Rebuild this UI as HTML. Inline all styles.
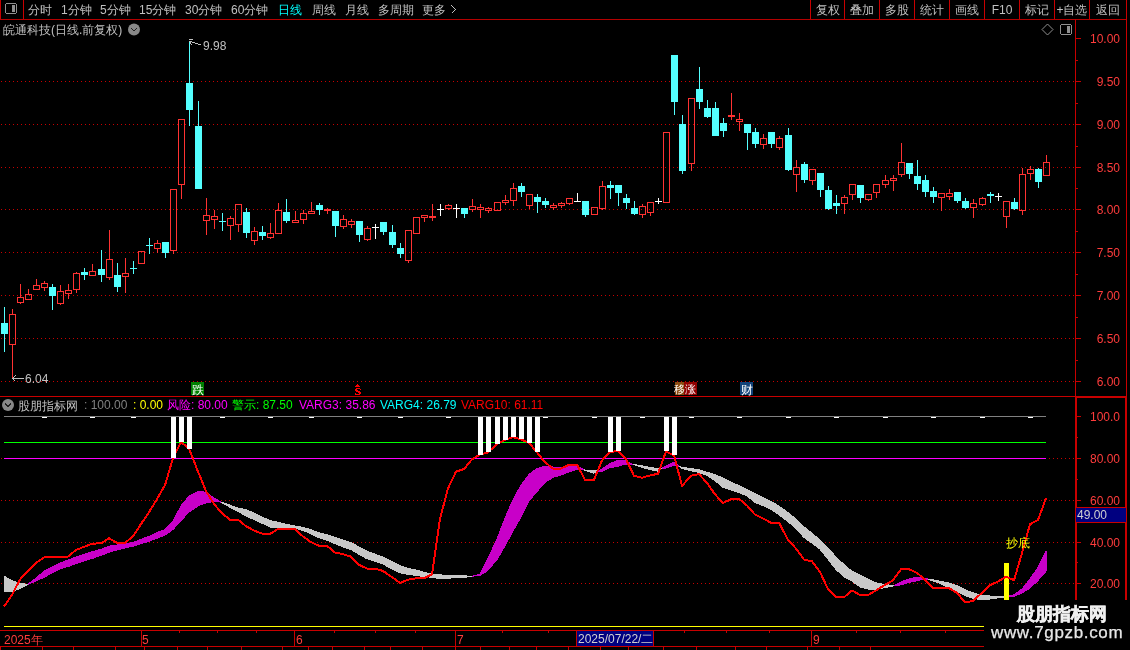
<!DOCTYPE html>
<html><head><meta charset="utf-8"><style>
html,body{margin:0;padding:0;background:#000;width:1130px;height:650px;overflow:hidden;}
svg{display:block;will-change:transform;}
text{font-family:"Liberation Sans",sans-serif;}
</style></head><body>
<svg width="1130" height="650" viewBox="0 0 1130 650" shape-rendering="crispEdges" font-family="Liberation Sans, sans-serif"><line x1="0" y1="19.5" x2="1126" y2="19.5" stroke="#b40000" stroke-width="1"/>
<line x1="23.5" y1="0" x2="23.5" y2="19" stroke="#c80000"/><line x1="0.5" y1="0" x2="0.5" y2="19" stroke="#c80000"/>
<rect x="5.5" y="3.5" width="11" height="10" rx="2" fill="none" stroke="#909090"/>
<rect x="12" y="5" width="3" height="7" fill="#909090"/>
<text x="28" y="14" fill="#c0c0c0" font-size="12">分时</text>
<text x="61" y="14" fill="#c0c0c0" font-size="12">1分钟</text>
<text x="100" y="14" fill="#c0c0c0" font-size="12">5分钟</text>
<text x="139" y="14" fill="#c0c0c0" font-size="12">15分钟</text>
<text x="185" y="14" fill="#c0c0c0" font-size="12">30分钟</text>
<text x="231" y="14" fill="#c0c0c0" font-size="12">60分钟</text>
<text x="278" y="14" fill="#00ffff" font-size="12">日线</text>
<text x="312" y="14" fill="#c0c0c0" font-size="12">周线</text>
<text x="345" y="14" fill="#c0c0c0" font-size="12">月线</text>
<text x="378" y="14" fill="#c0c0c0" font-size="12">多周期</text>
<text x="422" y="14" fill="#c0c0c0" font-size="12">更多</text>
<path d="M451.5 5.5 L455.5 9.5 L451.5 13.5" fill="none" stroke="#c0c0c0"/>
<line x1="810.5" y1="0" x2="810.5" y2="19" stroke="#c80000"/>
<line x1="844.5" y1="0" x2="844.5" y2="19" stroke="#c80000"/>
<line x1="879.5" y1="0" x2="879.5" y2="19" stroke="#c80000"/>
<line x1="914.5" y1="0" x2="914.5" y2="19" stroke="#c80000"/>
<line x1="949.5" y1="0" x2="949.5" y2="19" stroke="#c80000"/>
<line x1="984.5" y1="0" x2="984.5" y2="19" stroke="#c80000"/>
<line x1="1019.5" y1="0" x2="1019.5" y2="19" stroke="#c80000"/>
<line x1="1054.5" y1="0" x2="1054.5" y2="19" stroke="#c80000"/>
<line x1="1089.5" y1="0" x2="1089.5" y2="19" stroke="#c80000"/>
<text x="827.5" y="14" fill="#c0c0c0" font-size="12" text-anchor="middle">复权</text>
<text x="862.0" y="14" fill="#c0c0c0" font-size="12" text-anchor="middle">叠加</text>
<text x="897.0" y="14" fill="#c0c0c0" font-size="12" text-anchor="middle">多股</text>
<text x="932.0" y="14" fill="#c0c0c0" font-size="12" text-anchor="middle">统计</text>
<text x="967.0" y="14" fill="#c0c0c0" font-size="12" text-anchor="middle">画线</text>
<text x="1002.0" y="14" fill="#c0c0c0" font-size="12" text-anchor="middle">F10</text>
<text x="1037.0" y="14" fill="#c0c0c0" font-size="12" text-anchor="middle">标记</text>
<text x="1072.0" y="14" fill="#c0c0c0" font-size="12" text-anchor="middle">+自选</text>
<text x="1108.0" y="14" fill="#c0c0c0" font-size="12" text-anchor="middle">返回</text>
<line x1="1126.5" y1="0" x2="1126.5" y2="650" stroke="#c80000"/>
<rect x="1125" y="396" width="2" height="234" fill="#c80000"/>
<text x="3" y="34" fill="#c0c0c0" font-size="12">皖通科技(日线.前复权)</text>
<circle cx="134" cy="29.5" r="6" fill="#888888" shape-rendering="geometricPrecision"/>
<path d="M131 28 L134 31 L137 28" fill="none" stroke="#202020" stroke-width="1.2"/>
<path d="M1047.5 24 L1053 29.5 L1047.5 35 L1042 29.5 Z" fill="none" stroke="#909090" shape-rendering="geometricPrecision"/>
<rect x="1060.5" y="24.5" width="11" height="10" rx="2" fill="none" stroke="#909090"/>
<rect x="1067" y="26" width="3" height="7" fill="#909090"/>
<line x1="1" y1="81.5" x2="1075" y2="81.5" stroke="#c80000" stroke-dasharray="1 3"/>
<line x1="1" y1="124.5" x2="1075" y2="124.5" stroke="#c80000" stroke-dasharray="1 3"/>
<line x1="1" y1="167.5" x2="1075" y2="167.5" stroke="#c80000" stroke-dasharray="1 3"/>
<line x1="1" y1="209.5" x2="1075" y2="209.5" stroke="#c80000" stroke-dasharray="1 3"/>
<line x1="1" y1="252.5" x2="1075" y2="252.5" stroke="#c80000" stroke-dasharray="1 3"/>
<line x1="1" y1="295.5" x2="1075" y2="295.5" stroke="#c80000" stroke-dasharray="1 3"/>
<line x1="1" y1="338.5" x2="1075" y2="338.5" stroke="#c80000" stroke-dasharray="1 3"/>
<line x1="1" y1="381.5" x2="1075" y2="381.5" stroke="#c80000" stroke-dasharray="1 3"/>
<line x1="1075.5" y1="19" x2="1075.5" y2="650" stroke="#c80000"/>
<line x1="1075" y1="38.5" x2="1081" y2="38.5" stroke="#c80000"/>
<text x="1120" y="43" fill="#ff3c3c" font-size="12" text-anchor="end">10.00</text>
<line x1="1075" y1="60.5" x2="1078" y2="60.5" stroke="#c80000"/>
<line x1="1075" y1="81.5" x2="1081" y2="81.5" stroke="#c80000"/>
<text x="1120" y="86" fill="#ff3c3c" font-size="12" text-anchor="end">9.50</text>
<line x1="1075" y1="103.5" x2="1078" y2="103.5" stroke="#c80000"/>
<line x1="1075" y1="124.5" x2="1081" y2="124.5" stroke="#c80000"/>
<text x="1120" y="129" fill="#ff3c3c" font-size="12" text-anchor="end">9.00</text>
<line x1="1075" y1="146.5" x2="1078" y2="146.5" stroke="#c80000"/>
<line x1="1075" y1="167.5" x2="1081" y2="167.5" stroke="#c80000"/>
<text x="1120" y="172" fill="#ff3c3c" font-size="12" text-anchor="end">8.50</text>
<line x1="1075" y1="188.5" x2="1078" y2="188.5" stroke="#c80000"/>
<line x1="1075" y1="209.5" x2="1081" y2="209.5" stroke="#c80000"/>
<text x="1120" y="214" fill="#ff3c3c" font-size="12" text-anchor="end">8.00</text>
<line x1="1075" y1="231.5" x2="1078" y2="231.5" stroke="#c80000"/>
<line x1="1075" y1="252.5" x2="1081" y2="252.5" stroke="#c80000"/>
<text x="1120" y="257" fill="#ff3c3c" font-size="12" text-anchor="end">7.50</text>
<line x1="1075" y1="274.5" x2="1078" y2="274.5" stroke="#c80000"/>
<line x1="1075" y1="295.5" x2="1081" y2="295.5" stroke="#c80000"/>
<text x="1120" y="300" fill="#ff3c3c" font-size="12" text-anchor="end">7.00</text>
<line x1="1075" y1="317.5" x2="1078" y2="317.5" stroke="#c80000"/>
<line x1="1075" y1="338.5" x2="1081" y2="338.5" stroke="#c80000"/>
<text x="1120" y="343" fill="#ff3c3c" font-size="12" text-anchor="end">6.50</text>
<line x1="1075" y1="360.5" x2="1078" y2="360.5" stroke="#c80000"/>
<line x1="1075" y1="381.5" x2="1081" y2="381.5" stroke="#c80000"/>
<text x="1120" y="386" fill="#ff3c3c" font-size="12" text-anchor="end">6.00</text>
<path d="M9.5 314.5H15.5V344.5H9.5ZM12.5 309V314M12.5 345V378M17.5 297.5H23.5V302.5H17.5ZM20.5 284V297M20.5 303V304M25.5 294.5H31.5V299.5H25.5ZM28.5 289V294M33.5 285.5H39.5V289.5H33.5ZM36.5 279V285M41.5 283.5H47.5V287.5H41.5ZM44.5 281V283M44.5 288V291M57.5 291.5H63.5V303.5H57.5ZM60.5 285V291M60.5 304V305M65.5 290.5H71.5V293.5H65.5ZM68.5 284V290M68.5 294V299M73.5 273.5H79.5V289.5H73.5ZM76.5 272V273M76.5 290V293M89.5 271.5H95.5V275.5H89.5ZM92.5 264V271M106.5 259.5H112.5V277.5H106.5ZM109.5 230V259M109.5 278V280M122.5 273.5H128.5V276.5H122.5ZM125.5 258V273M125.5 277V293M138.5 251.5H144.5V263.5H138.5ZM154.5 243.5H160.5V248.5H154.5ZM157.5 240V243M157.5 249V253M170.5 189.5H176.5V250.5H170.5ZM173.5 251V254M178.5 119.5H184.5V184.5H178.5ZM181.5 185V199M203.5 215.5H209.5V220.5H203.5ZM206.5 198V215M206.5 221V235M211.5 216.5H217.5V219.5H211.5ZM214.5 210V216M214.5 220V229M227.5 218.5H233.5V225.5H227.5ZM230.5 216V218M230.5 226V240M235.5 204.5H241.5V224.5H235.5ZM238.5 225V232M251.5 231.5H257.5V240.5H251.5ZM254.5 227V231M254.5 241V245M267.5 233.5H273.5V237.5H267.5ZM270.5 223V233M270.5 238V239M275.5 210.5H281.5V233.5H275.5ZM278.5 203V210M292.5 220.5H298.5V222.5H292.5ZM295.5 211V220M300.5 213.5H306.5V219.5H300.5ZM303.5 210V213M303.5 220V224M308.5 211.5H314.5V213.5H308.5ZM311.5 202V211M324 209.5H331M324 210.5H331M327.5 208V209M327.5 211V214M340.5 219.5H346.5V226.5H340.5ZM343.5 215V219M343.5 227V229M348.5 221.5H354.5V224.5H348.5ZM351.5 219V221M351.5 225V228M364.5 228.5H370.5V239.5H364.5ZM367.5 226V228M367.5 240V241M405.5 230.5H411.5V260.5H405.5ZM408.5 261V263M413.5 217.5H419.5V233.5H413.5ZM421.5 215.5H427.5V217.5H421.5ZM424.5 218V222M429 216.5H436M429 217.5H436M432.5 204V216M432.5 218V221M445.5 205.5H451.5V208.5H445.5ZM448.5 204V205M448.5 209V210M469.5 206.5H475.5V209.5H469.5ZM472.5 199V206M472.5 210V212M477.5 207.5H483.5V209.5H477.5ZM480.5 204V207M480.5 210V218M485.5 208.5H491.5V210.5H485.5ZM488.5 207V208M488.5 211V213M494.5 202.5H500.5V210.5H494.5ZM502.5 200.5H508.5V202.5H502.5ZM505.5 195V200M505.5 203V205M510.5 188.5H516.5V200.5H510.5ZM513.5 183V188M513.5 201V206M526.5 194.5H532.5V205.5H526.5ZM529.5 206V209M550.5 205.5H556.5V207.5H550.5ZM553.5 203V205M553.5 208V210M558.5 203.5H564.5V205.5H558.5ZM561.5 202V203M561.5 206V208M566.5 198.5H572.5V203.5H566.5ZM569.5 204V205M591.5 207.5H597.5V214.5H591.5ZM599.5 186.5H605.5V208.5H599.5ZM602.5 181V186M602.5 209V210M639.5 206.5H645.5V214.5H639.5ZM642.5 204V206M642.5 215V218M647.5 202.5H653.5V212.5H647.5ZM650.5 213V216M663.5 132.5H669.5V202.5H663.5ZM688.5 98.5H694.5V163.5H688.5ZM691.5 164V171M728 115.5H735M728 116.5H735M731.5 93V115M731.5 117V120M736.5 119.5H742.5V121.5H736.5ZM739.5 113V119M739.5 122V131M760.5 138.5H766.5V144.5H760.5ZM763.5 134V138M763.5 145V149M776.5 138.5H782.5V147.5H776.5ZM779.5 136V138M779.5 148V150M793.5 167.5H799.5V174.5H793.5ZM796.5 160V167M796.5 175V192M809.5 169.5H815.5V180.5H809.5ZM812.5 181V185M841.5 197.5H847.5V203.5H841.5ZM844.5 195V197M844.5 204V214M849.5 184.5H855.5V194.5H849.5ZM852.5 195V200M865.5 194.5H871.5V199.5H865.5ZM868.5 200V201M873.5 184.5H879.5V192.5H873.5ZM876.5 193V198M882.5 180.5H888.5V184.5H882.5ZM885.5 175V180M885.5 185V188M890.5 178.5H896.5V180.5H890.5ZM893.5 175V178M893.5 181V191M898.5 162.5H904.5V174.5H898.5ZM901.5 143V162M901.5 175V177M938.5 193.5H944.5V197.5H938.5ZM941.5 198V211M946.5 193.5H952.5V196.5H946.5ZM949.5 189V193M949.5 197V200M970.5 203.5H976.5V207.5H970.5ZM973.5 199V203M973.5 208V218M979.5 198.5H985.5V204.5H979.5ZM982.5 197V198M982.5 205V206M1003.5 201.5H1009.5V216.5H1003.5ZM1006.5 217V228M1019.5 174.5H1025.5V210.5H1019.5ZM1022.5 168V174M1022.5 211V215M1027.5 169.5H1033.5V173.5H1027.5ZM1030.5 166V169M1030.5 174V180M1043.5 162.5H1049.5V175.5H1043.5ZM1046.5 155V162" fill="none" stroke="#ff3232" stroke-width="1"/>
<path d="M4.5 307V352M52.5 284V310M84.5 268V280M101.5 250V282M117.5 263V292M133.5 261V274M149.5 238V254M165.5 242V258M189.5 41V126M198.5 101V189M222.5 213V231M246.5 208V238M262.5 226V240M286.5 199V223M319.5 203V215M335.5 211V237M359.5 221V242M383.5 222V235M392.5 225V248M400.5 243V258M464.5 208V218M521.5 183V197M537.5 194V213M545.5 198V208M585.5 201V217M610.5 181V199M618.5 185V206M626.5 194V209M634.5 201V215M674.5 55V115M682.5 115V174M699.5 67V109M707.5 100V118M715.5 102V136M723.5 118V137M747.5 124V150M755.5 128V148M771.5 132V148M788.5 128V171M804.5 162V183M820.5 173V197M828.5 186V210M836.5 195V214M860.5 185V203M909.5 163V179M917.5 160V190M925.5 175V197M933.5 187V203M957.5 192V203M965.5 198V209M990.5 192V203M1014.5 198V210M1038.5 168V188" fill="none" stroke="#54ffff" stroke-width="1"/>
<g fill="#54ffff"><rect x="1" y="323" width="7" height="11"/><rect x="49" y="287" width="7" height="9"/><rect x="81" y="272" width="7" height="3"/><rect x="98" y="269" width="7" height="6"/><rect x="114" y="275" width="7" height="12"/><rect x="130" y="268" width="7" height="1"/><rect x="146" y="245" width="7" height="1"/><rect x="162" y="242" width="7" height="11"/><rect x="186" y="83" width="7" height="27"/><rect x="195" y="126" width="7" height="63"/><rect x="219" y="221" width="7" height="1"/><rect x="243" y="212" width="7" height="21"/><rect x="259" y="232" width="7" height="4"/><rect x="283" y="212" width="7" height="9"/><rect x="316" y="205" width="7" height="5"/><rect x="332" y="211" width="7" height="15"/><rect x="356" y="221" width="7" height="14"/><rect x="380" y="222" width="7" height="10"/><rect x="389" y="232" width="7" height="13"/><rect x="397" y="248" width="7" height="6"/><rect x="461" y="208" width="7" height="6"/><rect x="518" y="186" width="7" height="6"/><rect x="534" y="197" width="7" height="5"/><rect x="542" y="201" width="7" height="4"/><rect x="582" y="201" width="7" height="14"/><rect x="607" y="185" width="7" height="3"/><rect x="615" y="185" width="7" height="8"/><rect x="623" y="198" width="7" height="5"/><rect x="631" y="208" width="7" height="6"/><rect x="671" y="55" width="7" height="47"/><rect x="679" y="124" width="7" height="47"/><rect x="696" y="89" width="7" height="13"/><rect x="704" y="108" width="7" height="9"/><rect x="712" y="108" width="7" height="28"/><rect x="720" y="123" width="7" height="8"/><rect x="744" y="124" width="7" height="9"/><rect x="752" y="132" width="7" height="12"/><rect x="768" y="132" width="7" height="12"/><rect x="785" y="135" width="7" height="35"/><rect x="801" y="164" width="7" height="16"/><rect x="817" y="173" width="7" height="17"/><rect x="825" y="190" width="7" height="19"/><rect x="833" y="203" width="7" height="3"/><rect x="857" y="185" width="7" height="13"/><rect x="906" y="163" width="7" height="11"/><rect x="914" y="176" width="7" height="8"/><rect x="922" y="180" width="7" height="12"/><rect x="930" y="191" width="7" height="6"/><rect x="954" y="192" width="7" height="9"/><rect x="962" y="201" width="7" height="7"/><rect x="987" y="194" width="7" height="2"/><rect x="1011" y="202" width="7" height="7"/><rect x="1035" y="169" width="7" height="13"/></g>
<path d="M372 227.5H379M375.5 224V239M437 209.5H444M440.5 204V216M453 208.5H460M456.5 204V218M574 201.5H581M577.5 193V202M655 201.5H662M658.5 198V204M995 196.5H1002M998.5 193V201" fill="none" stroke="#ffffff" stroke-width="1"/>
<path d="M189 39.5H193M189 41.5H192M192 42.5H195M195 43.5H198M198 44.5H201M190.5 42V44M191.5 44V45" fill="none" stroke="#c0c0c0"/>
<text x="203" y="50" fill="#c0c0c0" font-size="12">9.98</text>
<path d="M12.5 378.5 L24 378.5 M12.5 378.5 L15.5 375.5 M12.5 378.5 L15.5 381.5" fill="none" stroke="#c0c0c0"/>
<text x="25" y="383" fill="#c0c0c0" font-size="12">6.04</text>
<rect x="191" y="382" width="13" height="13" fill="#008000"/>
<text x="197.5" y="393.5" fill="#ffffff" font-size="12" text-anchor="middle">跌</text>
<g fill="#ff0000"><rect x="357" y="384" width="1" height="1"/><rect x="356" y="385" width="3" height="1"/><rect x="355" y="386" width="5" height="1"/><rect x="356" y="388" width="4" height="1"/><rect x="355" y="389" width="2" height="1"/><rect x="360" y="389" width="1" height="1"/><rect x="355" y="390" width="3" height="1"/><rect x="356" y="391" width="4" height="1"/><rect x="358" y="392" width="3" height="1"/><rect x="355" y="393" width="1" height="1"/><rect x="359" y="393" width="2" height="1"/><rect x="355" y="394" width="5" height="1"/></g>
<rect x="675" y="382" width="9" height="13" fill="#8a4c12"/>
<rect x="684" y="382" width="13" height="13" fill="#900000"/>
<text x="679.5" y="393" fill="#ffffff" font-size="11" text-anchor="middle">移</text><text x="690.5" y="393" fill="#ffffff" font-size="11" text-anchor="middle">涨</text>
<rect x="740" y="382" width="13" height="13" fill="#12427a"/>
<text x="746.5" y="393.5" fill="#ffffff" font-size="12" text-anchor="middle">财</text>
<line x1="0" y1="396.5" x2="1126" y2="396.5" stroke="#c80000"/>
<rect x="1076" y="396" width="50" height="2" fill="#c80000"/>
<rect x="1075" y="396" width="2" height="234" fill="#c80000"/>
<circle cx="8" cy="405" r="6" fill="#888888" shape-rendering="geometricPrecision"/>
<path d="M5 403.5 L8 406.5 L11 403.5" fill="none" stroke="#202020" stroke-width="1.2"/>
<text x="18" y="409.5" fill="#c0c0c0" font-size="12">股朋指标网</text>
<text x="84" y="409" fill="#808080" font-size="12">: 100.00</text>
<text x="133" y="409" fill="#ffff00" font-size="12">: 0.00</text>
<text x="167" y="409" fill="#ff00ff" font-size="12">风险: 80.00</text>
<text x="232" y="409" fill="#00ff00" font-size="12">警示: 87.50</text>
<text x="299" y="409" fill="#ff00ff" font-size="12">VARG3: 35.86</text>
<text x="380" y="409" fill="#00ffff" font-size="12">VARG4: 26.79</text>
<text x="461" y="409" fill="#ff0000" font-size="12">VARG10: 61.11</text>
<line x1="1" y1="458.5" x2="1075" y2="458.5" stroke="#c80000" stroke-dasharray="1 3"/>
<line x1="1" y1="500.5" x2="1075" y2="500.5" stroke="#c80000" stroke-dasharray="1 3"/>
<line x1="1" y1="542.5" x2="1075" y2="542.5" stroke="#c80000" stroke-dasharray="1 3"/>
<line x1="1" y1="583.5" x2="1075" y2="583.5" stroke="#c80000" stroke-dasharray="1 3"/>
<line x1="4" y1="416.5" x2="1046" y2="416.5" stroke="#808080"/>
<line x1="4" y1="442.5" x2="1046" y2="442.5" stroke="#00ff00"/>
<line x1="4" y1="458.5" x2="1046" y2="458.5" stroke="#ff00ff"/>
<line x1="1075" y1="416.5" x2="1081" y2="416.5" stroke="#c80000"/>
<text x="1120" y="421" fill="#ff3c3c" font-size="12" text-anchor="end">100.0</text>
<line x1="1075" y1="458.5" x2="1081" y2="458.5" stroke="#c80000"/>
<text x="1120" y="463" fill="#ff3c3c" font-size="12" text-anchor="end">80.00</text>
<line x1="1075" y1="500.5" x2="1081" y2="500.5" stroke="#c80000"/>
<text x="1120" y="505" fill="#ff3c3c" font-size="12" text-anchor="end">60.00</text>
<line x1="1075" y1="542.5" x2="1081" y2="542.5" stroke="#c80000"/>
<text x="1120" y="547" fill="#ff3c3c" font-size="12" text-anchor="end">40.00</text>
<line x1="1075" y1="583.5" x2="1081" y2="583.5" stroke="#c80000"/>
<text x="1120" y="588" fill="#ff3c3c" font-size="12" text-anchor="end">20.00</text>
<line x1="1075" y1="437.5" x2="1078" y2="437.5" stroke="#c80000"/>
<line x1="1075" y1="479.5" x2="1078" y2="479.5" stroke="#c80000"/>
<line x1="1075" y1="521.5" x2="1078" y2="521.5" stroke="#c80000"/>
<line x1="1075" y1="562.5" x2="1078" y2="562.5" stroke="#c80000"/>
<path d="M4.0 591.5 L12.0 592.0 L20.0 588.3 L28.0 584.3 L28.0 584.3 L20.0 583.5 L12.0 580.5 L4.0 576.2Z" fill="#c8c8c8" stroke="#c8c8c8" stroke-width="1" stroke-linejoin="round"/>
<path d="M28.0 584.3 L28.0 584.3 L36.0 578.0 L44.0 571.3 L52.0 567.0 L60.0 563.2 L68.0 560.0 L76.0 557.0 L84.0 554.2 L92.0 551.7 L101.0 549.3 L109.0 546.2 L117.0 545.0 L125.0 543.7 L133.0 542.5 L141.0 539.4 L149.0 536.3 L157.0 532.6 L165.0 529.6 L173.0 521.0 L181.0 505.9 L189.0 496.0 L198.0 491.3 L206.0 492.3 L214.0 497.9 L220.9 502.1 L220.9 502.1 L214.0 501.6 L206.0 502.8 L198.0 505.9 L189.0 512.0 L181.0 520.6 L173.0 529.5 L165.0 535.1 L157.0 538.2 L149.0 541.3 L141.0 543.7 L133.0 546.2 L125.0 548.0 L117.0 549.9 L109.0 552.3 L101.0 555.4 L92.0 558.5 L84.0 561.0 L76.0 563.8 L68.0 566.5 L60.0 569.0 L52.0 573.0 L44.0 577.3 L36.0 581.0 L28.0 584.3 L28.0 584.3Z" fill="#c800c8" stroke="#c800c8" stroke-width="1" stroke-linejoin="round"/>
<path d="M220.9 502.1 L222.0 502.8 L230.0 507.3 L238.0 511.4 L246.0 516.0 L254.0 519.5 L262.0 523.2 L270.0 527.1 L278.0 527.8 L286.0 527.8 L295.0 527.8 L303.0 530.5 L311.0 533.8 L319.0 537.7 L327.0 540.2 L335.0 543.7 L343.0 546.9 L351.0 549.6 L359.0 554.4 L367.0 558.8 L375.0 561.4 L383.0 564.1 L392.0 569.0 L400.0 572.7 L408.0 574.4 L416.0 575.4 L424.0 576.5 L432.0 577.3 L440.0 578.7 L448.0 578.3 L456.0 577.6 L464.0 577.6 L472.0 576.2 L472.0 576.2 L464.0 575.9 L456.0 575.9 L448.0 575.5 L440.0 574.8 L432.0 574.2 L424.0 572.2 L416.0 570.1 L408.0 568.4 L400.0 565.7 L392.0 561.4 L383.0 557.1 L375.0 554.2 L367.0 551.2 L359.0 546.9 L351.0 542.6 L343.0 539.9 L335.0 537.2 L327.0 534.8 L319.0 532.8 L311.0 529.7 L303.0 527.3 L295.0 526.0 L286.0 524.2 L278.0 522.2 L270.0 520.5 L262.0 517.1 L254.0 513.1 L246.0 509.5 L238.0 508.0 L230.0 505.2 L222.0 502.2 L220.9 502.1Z" fill="#c8c8c8" stroke="#c8c8c8" stroke-width="1" stroke-linejoin="round"/>
<path d="M472.0 576.2 L472.0 576.2 L480.0 574.4 L488.0 558.2 L497.0 539.1 L505.0 518.0 L513.0 499.7 L521.0 485.1 L529.0 474.4 L537.0 468.5 L545.0 466.1 L553.0 467.0 L561.0 467.4 L569.0 466.3 L577.0 465.8 L584.0 469.9 L584.0 469.9 L577.0 469.5 L569.0 472.0 L561.0 474.9 L553.0 477.4 L545.0 482.4 L537.0 491.6 L529.0 501.0 L521.0 517.0 L513.0 531.0 L505.0 546.0 L497.0 559.5 L488.0 570.3 L480.0 575.5 L472.0 576.2 L472.0 576.2Z" fill="#c800c8" stroke="#c800c8" stroke-width="1" stroke-linejoin="round"/>
<path d="M584.0 469.9 L585.0 470.5 L594.0 473.2 L598.3 471.0 L598.3 471.0 L594.0 470.5 L585.0 470.0 L584.0 469.9Z" fill="#c8c8c8" stroke="#c8c8c8" stroke-width="1" stroke-linejoin="round"/>
<path d="M598.3 471.0 L602.0 469.1 L610.0 463.5 L618.0 460.2 L626.0 460.9 L633.3 464.5 L633.3 464.5 L626.0 464.0 L618.0 466.2 L610.0 467.7 L602.0 471.4 L598.3 471.0Z" fill="#c800c8" stroke="#c800c8" stroke-width="1" stroke-linejoin="round"/>
<path d="M633.3 464.5 L634.0 464.8 L642.0 467.3 L650.0 469.6 L658.0 471.2 L662.2 468.3 L662.2 468.3 L658.0 468.6 L650.0 467.3 L642.0 465.8 L634.0 464.5 L633.3 464.5Z" fill="#c8c8c8" stroke="#c8c8c8" stroke-width="1" stroke-linejoin="round"/>
<path d="M662.2 468.3 L666.0 465.8 L674.0 462.3 L679.6 466.7 L679.6 466.7 L674.0 465.4 L666.0 468.1 L662.2 468.3Z" fill="#c800c8" stroke="#c800c8" stroke-width="1" stroke-linejoin="round"/>
<path d="M679.6 466.7 L682.0 468.6 L691.0 470.8 L699.0 472.4 L707.0 475.5 L715.0 480.8 L723.0 487.3 L731.0 490.0 L739.0 492.5 L747.0 495.9 L755.0 502.4 L763.0 505.6 L771.0 509.4 L779.0 514.7 L788.0 521.8 L796.0 528.3 L804.0 537.5 L812.0 543.0 L820.0 549.2 L828.0 559.2 L836.0 569.5 L844.0 576.9 L852.0 581.2 L860.0 586.9 L868.0 589.1 L876.0 589.3 L885.0 587.7 L893.0 586.0 L894.2 585.4 L894.2 585.4 L893.0 585.5 L885.0 584.6 L876.0 582.9 L868.0 579.3 L860.0 574.9 L852.0 571.2 L844.0 564.6 L836.0 556.9 L828.0 548.0 L820.0 540.0 L812.0 533.2 L804.0 526.9 L796.0 519.0 L788.0 512.6 L779.0 506.1 L771.0 501.3 L763.0 497.5 L755.0 493.5 L747.0 489.4 L739.0 485.7 L731.0 482.1 L723.0 478.1 L715.0 474.6 L707.0 472.2 L699.0 469.7 L691.0 468.5 L682.0 467.3 L679.6 466.7Z" fill="#c8c8c8" stroke="#c8c8c8" stroke-width="1" stroke-linejoin="round"/>
<path d="M894.2 585.4 L901.0 582.0 L909.0 578.9 L917.0 577.1 L925.0 578.2 L928.3 579.3 L928.3 579.3 L925.0 578.9 L917.0 580.7 L909.0 582.4 L901.0 584.9 L894.2 585.4Z" fill="#c800c8" stroke="#c800c8" stroke-width="1" stroke-linejoin="round"/>
<path d="M928.3 579.3 L933.0 580.8 L941.0 583.8 L949.0 587.9 L957.0 591.5 L965.0 595.5 L973.0 598.2 L982.0 599.8 L990.0 599.0 L998.0 597.9 L1006.0 596.7 L1007.3 596.4 L1007.3 596.4 L1006.0 596.4 L998.0 596.2 L990.0 596.0 L982.0 595.5 L973.0 592.8 L965.0 589.8 L957.0 585.8 L949.0 583.1 L941.0 581.5 L933.0 579.8 L928.3 579.3Z" fill="#c8c8c8" stroke="#c8c8c8" stroke-width="1" stroke-linejoin="round"/>
<path d="M1007.3 596.4 L1014.0 594.7 L1022.0 589.0 L1030.0 579.0 L1038.0 567.5 L1046.0 551.3 L1046.0 571.2 L1038.0 580.4 L1030.0 588.2 L1022.0 593.0 L1014.0 596.2 L1007.3 596.4Z" fill="#c800c8" stroke="#c800c8" stroke-width="1" stroke-linejoin="round"/>
<rect x="1004" y="563" width="5" height="37" fill="#ffff00"/>
<polyline points="4,606.5 12,595.0 20,579.5 28,571.0 36,563.0 44,557.4 52,557.4 60,557.4 68,556.5 76,550.0 84,546.8 92,543.7 101,543.3 109,538.2 117,542.9 125,542.9 133,536.3 141,524.0 149,512.3 157,499.0 165,485.2 173,458.1 181,442.1 189,448.5 198,471.6 206,491.0 214,504.0 222,513.3 230,519.7 238,519.7 246,526.2 254,530.5 262,533.6 270,534.0 278,529.0 286,529.0 295,529.0 303,536.5 311,542.1 319,545.8 327,545.8 335,552.5 343,554.2 351,556.6 359,564.8 367,568.5 375,568.5 383,571.0 392,577.1 400,583.0 408,579.7 416,578.3 424,578.3 432,574.2 440,518.8 448,488.4 456,471.7 464,469.0 472,459.3 480,454.6 488,452.4 497,444.0 505,439.9 513,437.1 521,439.4 529,442.7 537,452.4 545,462.2 553,468.6 561,468.6 569,464.7 577,464.7 585,479.7 594,479.7 602,460.5 610,452.0 618,450.9 626,459.2 634,475.8 642,477.7 650,475.4 658,473.8 666,451.4 674,455.4 682,485.8 691,475.8 699,474.1 707,483.0 715,494.3 723,503.0 731,499.3 739,498.8 747,505.5 755,514.6 763,518.5 771,522.7 779,522.7 788,539.9 796,548.5 804,559.6 812,561.3 820,571.9 828,589.2 836,597.3 844,597.3 852,590.4 860,595.0 868,595.0 876,590.4 885,584.9 893,580.3 901,569.2 909,569.2 917,572.9 925,579.7 933,587.7 941,587.7 949,588.2 957,592.8 965,602.5 973,600.8 982,592.8 990,585.2 998,581.5 1006,576.6 1014,580.2 1022,553.0 1030,524.2 1038,519.9 1046,498.3" fill="none" stroke="#ff0000" stroke-width="2" stroke-linejoin="round"/>
<g fill="#ffffff"><rect x="171" y="417" width="5" height="41"/><rect x="179" y="417" width="5" height="25"/><rect x="187" y="417" width="5" height="32"/><rect x="478" y="417" width="5" height="38"/><rect x="486" y="417" width="5" height="35"/><rect x="495" y="417" width="5" height="27"/><rect x="503" y="417" width="5" height="23"/><rect x="511" y="417" width="5" height="20"/><rect x="519" y="417" width="5" height="22"/><rect x="527" y="417" width="5" height="26"/><rect x="535" y="417" width="5" height="35"/><rect x="608" y="417" width="5" height="35"/><rect x="616" y="417" width="5" height="34"/><rect x="664" y="417" width="5" height="34"/><rect x="672" y="417" width="5" height="38"/></g>
<rect x="42" y="417" width="5" height="1" fill="#ffffff"/>
<rect x="90" y="417" width="5" height="1" fill="#ffffff"/>
<rect x="131" y="417" width="5" height="1" fill="#ffffff"/>
<rect x="220" y="417" width="5" height="1" fill="#ffffff"/>
<rect x="268" y="417" width="5" height="1" fill="#ffffff"/>
<rect x="309" y="417" width="5" height="1" fill="#ffffff"/>
<rect x="357" y="417" width="5" height="1" fill="#ffffff"/>
<rect x="398" y="417" width="5" height="1" fill="#ffffff"/>
<rect x="446" y="417" width="5" height="1" fill="#ffffff"/>
<rect x="543" y="417" width="5" height="1" fill="#ffffff"/>
<rect x="592" y="417" width="5" height="1" fill="#ffffff"/>
<rect x="640" y="417" width="5" height="1" fill="#ffffff"/>
<rect x="689" y="417" width="5" height="1" fill="#ffffff"/>
<rect x="737" y="417" width="5" height="1" fill="#ffffff"/>
<rect x="786" y="417" width="5" height="1" fill="#ffffff"/>
<rect x="834" y="417" width="5" height="1" fill="#ffffff"/>
<rect x="883" y="417" width="5" height="1" fill="#ffffff"/>
<rect x="931" y="417" width="5" height="1" fill="#ffffff"/>
<rect x="980" y="417" width="5" height="1" fill="#ffffff"/>
<rect x="1028" y="417" width="5" height="1" fill="#ffffff"/>
<text x="1006" y="547" fill="#ffff00" font-size="12">抄底</text>
<rect x="1076" y="507" width="50" height="16" fill="#000080"/>
<line x1="1076" y1="507.5" x2="1126" y2="507.5" stroke="#c80000"/>
<line x1="1076" y1="522.5" x2="1126" y2="522.5" stroke="#c80000"/>
<text x="1077" y="518.5" fill="#d0d0d0" font-size="12">49.00</text>
<line x1="4" y1="626" x2="1075" y2="626" stroke="#ffff00"/>
<line x1="0" y1="630.5" x2="1126" y2="630.5" stroke="#c80000"/>
<line x1="0" y1="646.5" x2="1126" y2="646.5" stroke="#c80000"/>
<line x1="141.5" y1="630" x2="141.5" y2="646" stroke="#c80000"/>
<line x1="294.5" y1="630" x2="294.5" y2="646" stroke="#c80000"/>
<line x1="455.5" y1="630" x2="455.5" y2="646" stroke="#c80000"/>
<line x1="811.5" y1="630" x2="811.5" y2="646" stroke="#c80000"/>
<line x1="179.5" y1="630" x2="179.5" y2="633" stroke="#c80000"/>
<line x1="217.5" y1="630" x2="217.5" y2="633" stroke="#c80000"/>
<line x1="256.5" y1="630" x2="256.5" y2="633" stroke="#c80000"/>
<line x1="334.5" y1="630" x2="334.5" y2="633" stroke="#c80000"/>
<line x1="375.5" y1="630" x2="375.5" y2="633" stroke="#c80000"/>
<line x1="415.5" y1="630" x2="415.5" y2="633" stroke="#c80000"/>
<line x1="502.5" y1="630" x2="502.5" y2="633" stroke="#c80000"/>
<line x1="548.5" y1="630" x2="548.5" y2="633" stroke="#c80000"/>
<line x1="684.5" y1="630" x2="684.5" y2="633" stroke="#c80000"/>
<line x1="726.5" y1="630" x2="726.5" y2="633" stroke="#c80000"/>
<line x1="769.5" y1="630" x2="769.5" y2="633" stroke="#c80000"/>
<line x1="856.5" y1="630" x2="856.5" y2="633" stroke="#c80000"/>
<line x1="900.5" y1="630" x2="900.5" y2="633" stroke="#c80000"/>
<line x1="945.5" y1="630" x2="945.5" y2="633" stroke="#c80000"/>
<line x1="1030.5" y1="630" x2="1030.5" y2="633" stroke="#c80000"/>
<text x="4" y="644" fill="#ff3c3c" font-size="12">2025年</text>
<text x="142" y="644" fill="#ff3c3c" font-size="12">5</text>
<text x="296" y="644" fill="#ff3c3c" font-size="12">6</text>
<text x="457" y="644" fill="#ff3c3c" font-size="12">7</text>
<text x="813" y="644" fill="#ff3c3c" font-size="12">9</text>
<rect x="576" y="630" width="78" height="16" fill="#000080"/>
<rect x="576.5" y="630.5" width="77" height="16" fill="none" stroke="#c80000"/>
<text x="578" y="643" fill="#d0d0d0" font-size="12">2025/07/22/二</text>
<line x1="0.5" y1="647" x2="0.5" y2="650" stroke="#c80000"/>
<line x1="42.5" y1="647" x2="42.5" y2="650" stroke="#c80000"/>
<line x1="73.5" y1="647" x2="73.5" y2="650" stroke="#c80000"/>
<line x1="115.5" y1="647" x2="115.5" y2="650" stroke="#c80000"/>
<line x1="144.5" y1="647" x2="144.5" y2="650" stroke="#c80000"/>
<line x1="177.5" y1="647" x2="177.5" y2="650" stroke="#c80000"/>
<line x1="207.5" y1="647" x2="207.5" y2="650" stroke="#c80000"/>
<line x1="241.5" y1="647" x2="241.5" y2="650" stroke="#c80000"/>
<line x1="282.5" y1="647" x2="282.5" y2="650" stroke="#c80000"/>
<line x1="308.5" y1="647" x2="308.5" y2="650" stroke="#c80000"/>
<line x1="332.5" y1="647" x2="332.5" y2="650" stroke="#c80000"/>
<line x1="364.5" y1="647" x2="364.5" y2="650" stroke="#c80000"/>
<line x1="390.5" y1="647" x2="390.5" y2="650" stroke="#c80000"/>
<line x1="422.5" y1="647" x2="422.5" y2="650" stroke="#c80000"/>
<line x1="455.5" y1="647" x2="455.5" y2="650" stroke="#c80000"/>
<line x1="480.5" y1="647" x2="480.5" y2="650" stroke="#c80000"/>
<line x1="509.5" y1="647" x2="509.5" y2="650" stroke="#c80000"/>
<line x1="536.5" y1="647" x2="536.5" y2="650" stroke="#c80000"/>
<line x1="568.5" y1="647" x2="568.5" y2="650" stroke="#c80000"/>
<line x1="600.5" y1="647" x2="600.5" y2="650" stroke="#c80000"/>
<line x1="628.5" y1="647" x2="628.5" y2="650" stroke="#c80000"/>
<line x1="663.5" y1="647" x2="663.5" y2="650" stroke="#c80000"/>
<line x1="696.5" y1="647" x2="696.5" y2="650" stroke="#c80000"/>
<line x1="735.5" y1="647" x2="735.5" y2="650" stroke="#c80000"/>
<line x1="766.5" y1="647" x2="766.5" y2="650" stroke="#c80000"/>
<line x1="807.5" y1="647" x2="807.5" y2="650" stroke="#c80000"/>
<line x1="839.5" y1="647" x2="839.5" y2="650" stroke="#c80000"/>
<line x1="870.5" y1="647" x2="870.5" y2="650" stroke="#c80000"/>
<rect x="984" y="600" width="146" height="50" fill="#000000"/>
<text x="1062" y="619.8" fill="#f0f0f0" font-size="18" font-weight="bold" text-anchor="middle" stroke="#f0f0f0" stroke-width="0.5">股朋指标网</text>
<text x="991" y="637.8" fill="#e8e8e8" font-size="17" letter-spacing="0.65" stroke="#e8e8e8" stroke-width="0.25">www.7gpzb.com</text></svg>
</body></html>
